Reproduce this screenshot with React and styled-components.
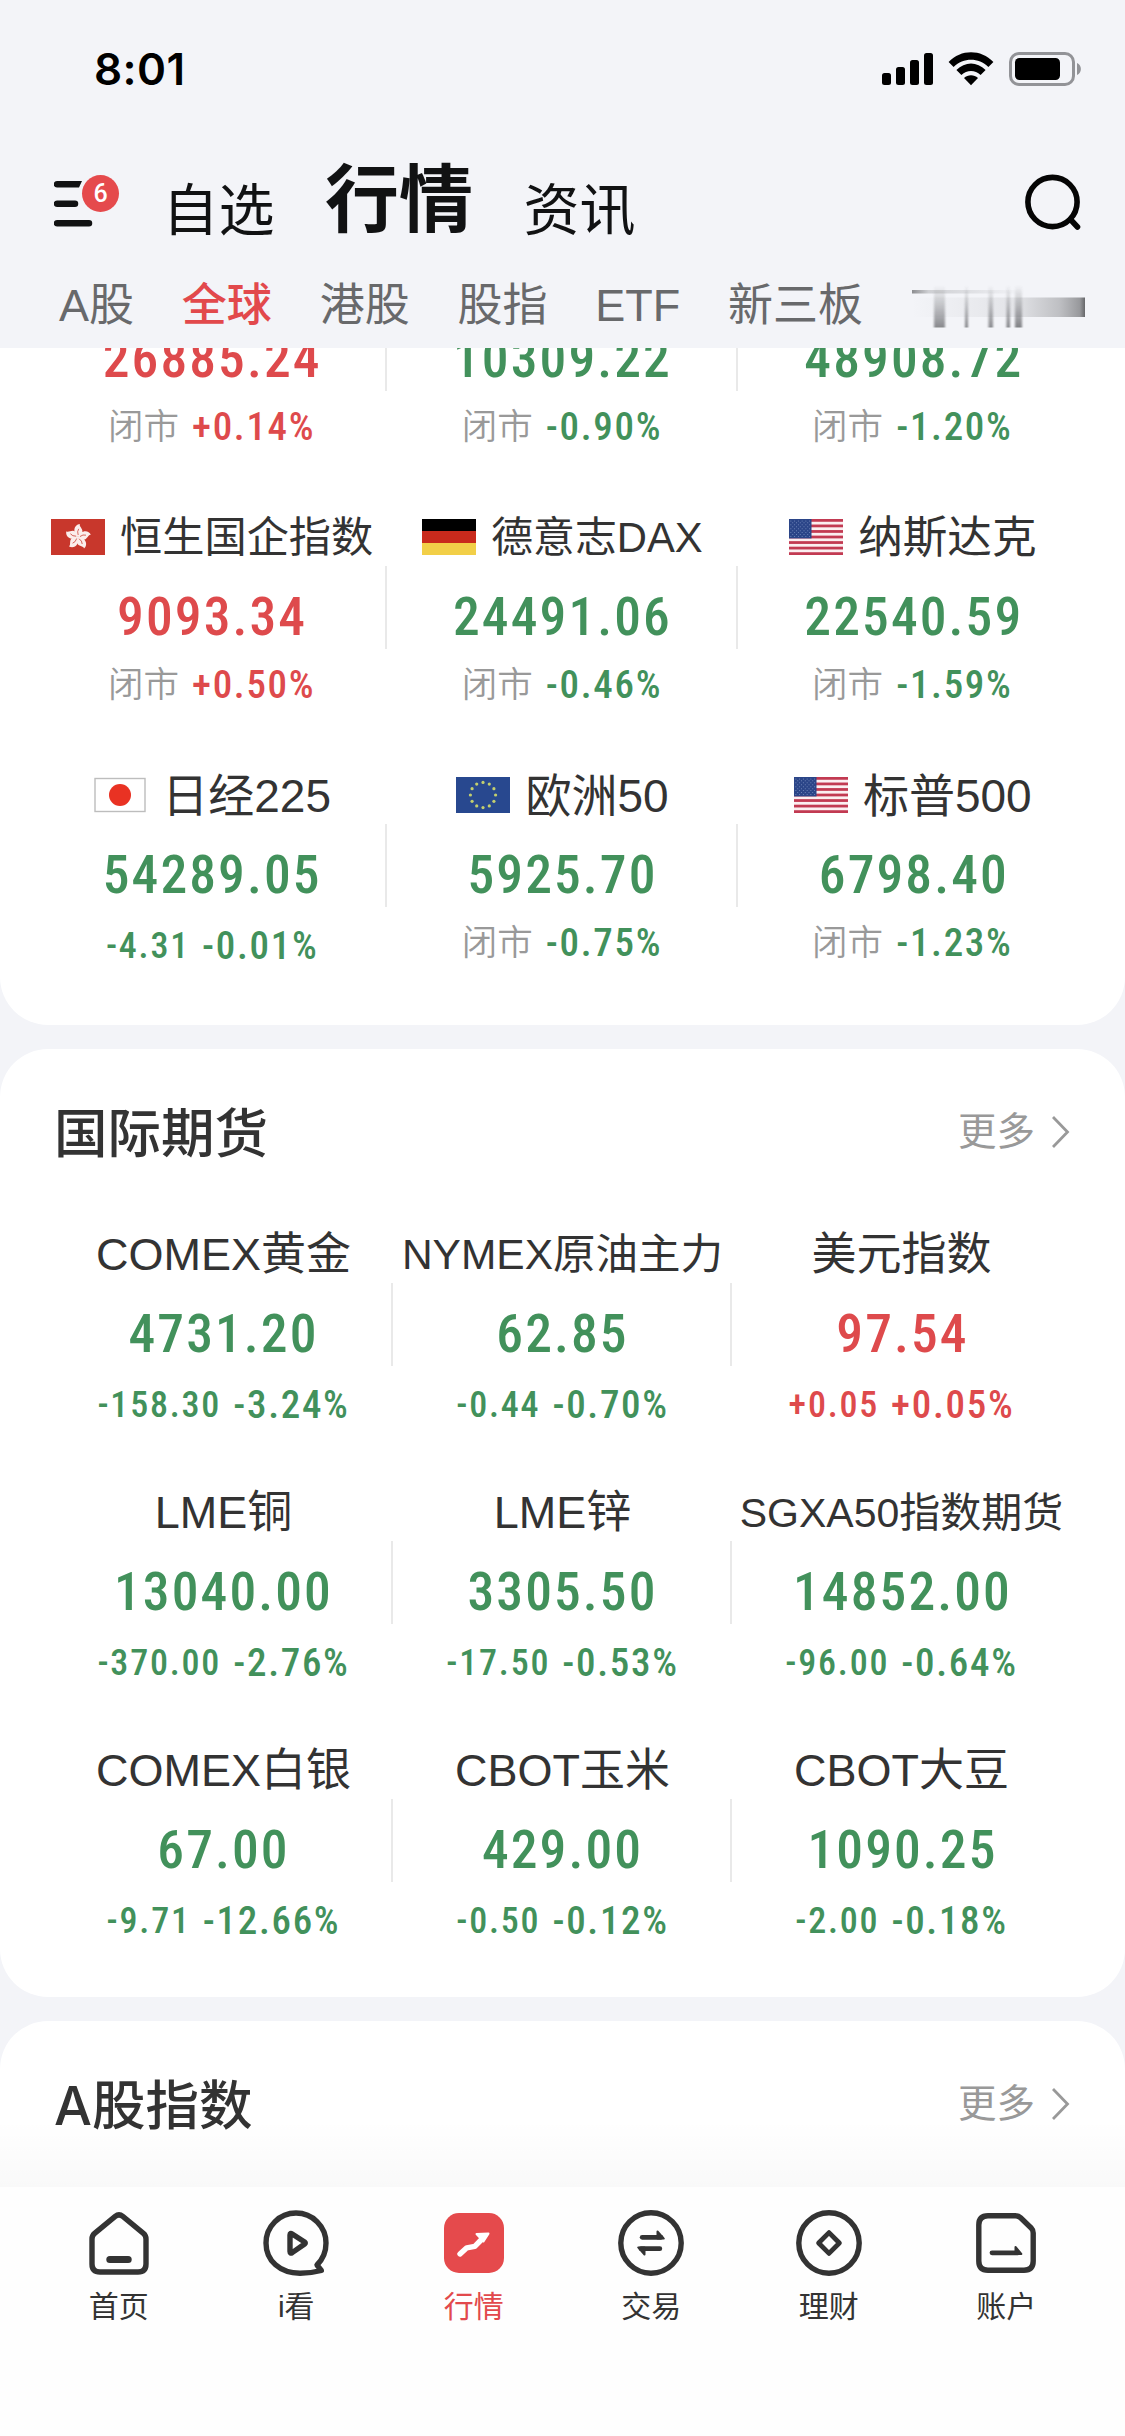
import React from "react";
import styled, { createGlobalStyle } from "styled-components";

const RED = "#de4a4c";
const GREEN = "#42915b";
const INK = "#333333";

const textStack = `"Liberation Sans", "Noto Sans CJK SC", sans-serif`;
const numberStack = `Roboto, "Noto Sans CJK SC", sans-serif`;

const GlobalStyle = createGlobalStyle`
  * { box-sizing: border-box; }
  body {
    margin: 0;
    background: #f3f4f8;
    font-family: ${textStack};
    color: ${INK};
  }
  svg { display: block; flex: none; }
`;

const Screen = styled.div`
  width: 1125px;
  height: 2436px;
  display: flex;
  flex-direction: column;
  overflow: hidden;
  background: #f3f4f8;
`;

/* ---------- header ---------- */

const Header = styled.header`
  flex: none;
  height: 348px;
  background: #f3f4f8;
`;

const StatusBar = styled.div`
  height: 138px;
  padding: 0 43px 0 94px;
  display: flex;
  align-items: center;
  justify-content: space-between;
`;

const Clock = styled.span`
  font: 600 44px/1 Inter, sans-serif;
  letter-spacing: 0.4px;
  color: #000;
`;

const StatusIcons = styled.div`
  display: flex;
  align-items: center;
  gap: 15px;
`;

const NavBar = styled.nav`
  height: 122px;
  padding: 3px 43px 0 54px;
  display: flex;
  align-items: center;
`;

const MenuButton = styled.div`
  position: relative;
  width: 65px;
  height: 54px;
  padding-top: 6px;
  margin-top: 3px;
`;

const Badge = styled.span`
  position: absolute;
  top: 0;
  right: 0;
  width: 37px;
  height: 37px;
  border-radius: 50%;
  background: #e54a4c;
  color: #fff;
  font: 500 25px/37px ${numberStack};
  text-align: center;
`;

const NavTabs = styled.div`
  display: flex;
  align-items: center;
  gap: 50.5px;
  margin-left: 43.5px;
  flex: 1;
`;

const NavTab = styled.span`
  color: #111213;
  line-height: 80px;
  font-size: ${(p) => (p.$active ? 74 : 56)}px;
  font-weight: ${(p) => (p.$active ? 700 : 400)};
  padding-top: ${(p) => (p.$active ? 0 : 20)}px;
`;

const SubTabs = styled.div`
  height: 88px;
  padding: 4px 0 0 59px;
  display: flex;
  align-items: center;
  gap: 47.8px;
`;

const SubTab = styled.span`
  font-size: 45px;
  line-height: 60px;
  white-space: nowrap;
  color: ${(p) => (p.$active ? "#e2494c" : "#68696b")};
  font-weight: ${(p) => (p.$active ? 500 : 400)};
`;

/* ---------- content ---------- */

const Content = styled.main`
  flex: 1;
  min-height: 0;
  overflow: hidden;
  display: flex;
  flex-direction: column;
  gap: 24px;
`;

const Card = styled.section`
  flex: none;
  background: #fff;
  border-radius: ${(p) => (p.$scrolled ? "0 0 48px 48px" : "48px")};
  margin-top: ${(p) => (p.$scrolled ? -40 : 0)}px;
  padding-bottom: ${(p) => (p.$scrolled ? 3 : p.$continues ? 120 : 0)}px;
`;

const CardHeader = styled.div`
  height: 170px;
  margin-bottom: 4px;
  padding: 0 55px 0 54px;
  display: flex;
  align-items: center;
  justify-content: space-between;
`;

const CardTitle = styled.h2`
  margin: 0;
  font-family: Inter, "Noto Sans CJK SC", sans-serif;
  font-size: 53.5px;
  line-height: 64px;
  font-weight: 500;
  color: ${INK};
`;

const More = styled.span`
  display: flex;
  align-items: center;
  gap: 17px;
  margin-top: -4px;
  font-size: 38.5px;
  line-height: 48px;
  color: #999;
`;

const QuoteGrid = styled.div`
  display: grid;
  grid-template-columns: repeat(3, 1fr);
  padding: 0 ${(p) => p.$inset}px;
`;

const Quote = styled.div`
  display: flex;
  flex-direction: column;
  height: ${(p) => (p.$partial ? 198 : 258)}px;
`;

const QuoteName = styled.div`
  height: 60px;
  padding-top: 4px;
  display: flex;
  align-items: center;
  justify-content: center;
  gap: 15px;
  margin: 0 -20px;
  white-space: nowrap;
  line-height: 60px;
  font-size: ${(p) => p.$size}px;
  color: ${INK};

  svg {
    margin-top: -2px;
  }
`;

const Price = styled.div`
  height: 83px;
  padding-top: 18px;
  padding-left: 2px;
  line-height: 66px;
  text-align: center;
  font-family: ${numberStack};
  font-weight: 500;
  font-stretch: 87%;
  font-size: 53.5px;
  letter-spacing: 2.1px;
  color: ${(p) => p.$color};
  border-right: ${(p) => (p.$last ? "0" : "2px solid #e9e9e9")};
`;

const Change = styled.div`
  height: 72px;
  padding-top: ${(p) => (p.$live ? 6 : 0)}px;
  padding-right: ${(p) => (p.$live ? 0 : 1)}px;
  display: flex;
  align-items: center;
  justify-content: center;
  gap: ${(p) => (p.$live ? 12 : 13)}px;
  color: ${(p) => p.$color};
  font-family: ${numberStack};
  font-stretch: 87%;
  white-space: nowrap;
`;

const Closed = styled.span`
  font-family: ${textStack};
  font-size: 35.5px;
  line-height: 48px;
  margin-top: -1px;
  font-weight: 350;
  color: #999;
`;

const Delta = styled.span`
  font-size: 36px;
  line-height: 48px;
  font-weight: 500;
  letter-spacing: 1.8px;
`;

const Percent = styled.span`
  font-size: 39px;
  line-height: 48px;
  font-weight: 500;
  letter-spacing: 1.7px;
`;

/* ---------- bottom tab bar ---------- */

const FadeAbove = styled.div`
  flex: none;
  height: 68px;
  margin-top: -68px;
  position: relative;
  background: linear-gradient(rgba(0, 0, 0, 0), rgba(0, 0, 0, 0.022));
`;

const TabBar = styled.footer`
  flex: none;
  height: 249px;
  padding: 22px 30px 0;
  display: grid;
  grid-template-columns: repeat(6, 1fr);
  align-items: start;
  background: #fefefe;
`;

const TabItem = styled.div`
  display: flex;
  flex-direction: column;
  align-items: center;
  gap: 10px;
  font-size: 30px;
  line-height: 40px;
  color: ${(p) => (p.$active ? "#e2494c" : INK)};
`;

/* ---------- icons ---------- */

const Signal = () => (
  <svg width="51" height="34" viewBox="0 0 51 34">
    <rect x="0" y="21" width="9" height="12" rx="2.5" />
    <rect x="14" y="15" width="9" height="18" rx="2.5" />
    <rect x="28" y="8" width="9" height="25" rx="2.5" />
    <rect x="42" y="1" width="9" height="32" rx="2.5" />
  </svg>
);

const Wifi = () => (
  <svg width="46" height="34" viewBox="0 0 46 34">
    <path d="M0.6 10 C13 -3 33 -3 45.4 10 L40.4 15 C30.5 5.4 15.5 5.4 5.6 15 Z" />
    <path d="M8.4 18 C17 9.3 29 9.3 37.6 18 L32.6 23 C27 17.8 19 17.8 13.4 23 Z" />
    <path d="M16 26 C20 22.2 26 22.2 30 26 L23 33.2 Z" />
  </svg>
);

const Battery = () => (
  <svg width="73" height="34" viewBox="0 0 73 34">
    <rect x="1.5" y="1.5" width="63" height="31" rx="8.5" fill="none" stroke="#929397" strokeWidth="3" />
    <rect x="6" y="6" width="45" height="22" rx="4.5" />
    <path d="M68 11 C73.2 13 73.2 21 68 23 Z" fill="#929397" />
  </svg>
);

const MenuLines = () => (
  <svg width="44" height="46" viewBox="0 0 44 46">
    <path d="M3 0 H28 L25 6.5 H3 A3.2 3.2 0 0 1 3 0Z M3 19.5 H21 A3.2 3.2 0 0 1 21 26 H3 A3.2 3.2 0 0 1 3 19.5Z M3 39 H35 A3.2 3.2 0 0 1 35 45.5 H3 A3.2 3.2 0 0 1 3 39Z" fill="#111213" />
  </svg>
);

const Search = () => (
  <svg width="58" height="60" viewBox="0 0 58 60" fill="none" stroke="#050505" strokeWidth="5.6" strokeLinecap="round">
    <circle cx="28.5" cy="31" r="24.6" />
    <path d="M46.5 48.5 L53.5 56" />
  </svg>
);

const smearBars = [
  [23, 11, 0.65],
  [54, 3, 0.7],
  [77.5, 4.5, 0.65],
  [95.5, 3.5, 0.7],
  [104, 7, 0.7],
];

const SmearedTab = () => (
  <svg width="176" height="48" viewBox="0 0 176 48">
    <defs>
      <linearGradient id="down" x1="0" y1="0" x2="0" y2="1">
        <stop offset="0" stopColor="#606164" stopOpacity="0" />
        <stop offset="0.5" stopColor="#606164" stopOpacity="0.5" />
        <stop offset="1" stopColor="#505154" stopOpacity="1" />
      </linearGradient>
      <linearGradient id="across" x1="0" y1="0" x2="1" y2="0">
        <stop offset="0" stopColor="#77787b" stopOpacity="0" />
        <stop offset="0.6" stopColor="#77787b" stopOpacity="0.13" />
        <stop offset="0.85" stopColor="#77787b" stopOpacity="0.42" />
        <stop offset="0.97" stopColor="#66676a" stopOpacity="0.65" />
        <stop offset="1" stopColor="#66676a" stopOpacity="1" />
      </linearGradient>
      <linearGradient id="back" x1="0" y1="0" x2="1" y2="0">
        <stop offset="0" stopColor="#606164" stopOpacity="0.7" />
        <stop offset="0.15" stopColor="#606164" stopOpacity="0.25" />
        <stop offset="1" stopColor="#606164" stopOpacity="0" />
      </linearGradient>
      <filter id="soften" x="-50%" y="-5%" width="200%" height="110%">
        <feGaussianBlur stdDeviation="0.9 0.5" />
      </filter>
    </defs>
    <rect x="1" y="15.5" width="173" height="19.5" fill="url(#across)" />
    <rect x="1" y="8" width="110" height="3.5" fill="url(#back)" />
    {smearBars.map(([x, w, o]) => (
      <rect key={x} x={x} y="3" width={w} height="42.5" fill="url(#down)" opacity={o} filter="url(#soften)" />
    ))}
  </svg>
);

const Chevron = () => (
  <svg width="18" height="32" viewBox="0 0 18 32" fill="none" stroke="#999" strokeWidth="2.8">
    <path d="M1 1 L15.5 16 L1 31" />
  </svg>
);

const TabIcon = ({ children }) => (
  <svg width="68" height="68" viewBox="0 0 68 68" fill="none" stroke={INK} strokeWidth="5.4" strokeLinecap="round" strokeLinejoin="round">
    {children}
  </svg>
);

const HomeIcon = () => (
  <TabIcon>
    <path d="M30.2 7.4 Q34 4.4 37.8 7.4 L58.4 24.4 Q61 26.6 61 30 V55 Q61 63 53 63 H15 Q7 63 7 55 V30 Q7 26.6 9.6 24.4 Z" />
    <path d="M24.8 50.5 H43.2" strokeWidth="7" />
  </TabIcon>
);

const WatchIcon = () => (
  <TabIcon>
    <path d="M55 56 A31 31 0 0 0 64 34 A30 30 0 0 0 4 34 C4 52 18 64.2 38 64.2 C46 64.2 53 63.2 59.3 61.5 Z" />
    <path d="M28 26 Q28 23.6 30.2 25 L42.6 33 Q44 34 42.6 35 L30.2 43.6 Q28 45 28 42.6 Z" />
  </TabIcon>
);

const MarketIcon = () => (
  <TabIcon>
    <rect x="4" y="4" width="60" height="60" rx="15" fill="#e54a4c" stroke="none" />
    <path d="M20 45 L26.8 38.8 L34.8 37.4 L42 30" stroke="#fff" />
    <path d="M36.5 25 L48.5 24.6 L43.5 32.5 Z" fill="#fff" stroke="#fff" strokeWidth="2" />
  </TabIcon>
);

const TradeIcon = () => (
  <TabIcon>
    <circle cx="34" cy="34" r="30.2" />
    <path d="M25.2 28.3 H44" strokeWidth="4.8" />
    <path d="M40.5 22.5 L46.8 29.6 H40.5 Z" fill={INK} stroke={INK} strokeWidth="2" />
    <path d="M42.8 39.7 H24" strokeWidth="4.8" />
    <path d="M27.5 45.5 L21.2 38.4 H27.5 Z" fill={INK} stroke={INK} strokeWidth="2" />
  </TabIcon>
);

const WealthIcon = () => (
  <TabIcon>
    <circle cx="34" cy="34" r="30.2" />
    <path d="M34 23.6 L44.4 34 L34 44.4 L23.6 34 Z" strokeWidth="4.8" />
  </TabIcon>
);

const AccountIcon = () => (
  <TabIcon>
    <path d="M16 6.8 H43.5 Q46.5 6.8 48.6 8.8 L59.2 19 Q61.2 21 61.2 24 V52 Q61.2 61.2 52 61.2 H16 Q6.8 61.2 6.8 52 V16 Q6.8 6.8 16 6.8 Z" />
    <path d="M20 43.8 H46" strokeWidth="4.8" />
    <path d="M43.5 38 L49.3 45 H43.5 Z" fill={INK} stroke={INK} strokeWidth="2" />
  </TabIcon>
);

/* ---------- flags ---------- */

const around = (n, r, cx, cy) =>
  Array.from({ length: n }, (_, i) => {
    const a = (i * 2 * Math.PI) / n - Math.PI / 2;
    return [cx + r * Math.cos(a), cy + r * Math.sin(a)];
  });

const FlagFrame = ({ children }) => (
  <svg width="54" height="36" viewBox="0 0 54 36">{children}</svg>
);

const flags = {
  hk: (
    <FlagFrame>
      <rect width="54" height="36" fill="#c8372c" />
      {[5, 77, 149, 221, 293].map((a) => (
        <g key={a} transform={`rotate(${a} 27 18)`}>
          <path d="M27 18 C21 14.5 21.5 6 27.8 5 C26.6 7.5 32 9.5 30.8 13.5 C30 16 28 16.5 27 18 Z" fill="#fbeeec" />
          <path d="M27 16 Q25.4 12.5 27 9.8" stroke="#c8372c" strokeWidth="0.7" fill="none" />
        </g>
      ))}
    </FlagFrame>
  ),
  de: (
    <FlagFrame>
      <rect width="54" height="12" fill="#000" />
      <rect y="12" width="54" height="12" fill="#c92a1c" />
      <rect y="24" width="54" height="12" fill="#f2cf48" />
    </FlagFrame>
  ),
  us: (
    <FlagFrame>
      <rect width="54" height="36" fill="#fbeff1" />
      {[0, 1, 2, 3, 4, 5, 6].map((i) => (
        <rect key={i} y={(i * 72) / 13} width="54" height={36 / 13} fill="#c23a52" />
      ))}
      <rect width="22.5" height="19.4" fill="#2b4588" />
      {Array.from({ length: 9 }, (_, r) =>
        Array.from({ length: r % 2 ? 5 : 6 }, (_, c) => (
          <circle key={`${r}-${c}`} cx={1.9 + c * 3.75 + (r % 2 ? 1.87 : 0)} cy={1.9 + r * 1.95} r="0.5" fill="#7f94c4" />
        ))
      )}
    </FlagFrame>
  ),
  jp: (
    <FlagFrame>
      <rect x="2" y="1.5" width="50" height="33" fill="#fff" stroke="#bdbdbd" strokeWidth="1.4" />
      <circle cx="27" cy="18" r="11" fill="#e93223" />
    </FlagFrame>
  ),
  eu: (
    <FlagFrame>
      <rect width="54" height="36" fill="#28488f" />
      {around(12, 12.6, 27, 18).map(([x, y], i) => (
        <circle key={i} cx={x} cy={y} r="1.6" fill="#c3cf6e" />
      ))}
    </FlagFrame>
  ),
};

/* ---------- data ---------- */

const globalIndices = [
  { price: "26885.24", pct: "+0.14%" },
  { price: "10309.22", pct: "-0.90%" },
  { price: "48908.72", pct: "-1.20%" },
  { flag: "hk", name: "恒生国企指数", size: 42.2, price: "9093.34", pct: "+0.50%" },
  { flag: "de", name: "德意志DAX", size: 41.8, price: "24491.06", pct: "-0.46%" },
  { flag: "us", name: "纳斯达克", size: 44.6, price: "22540.59", pct: "-1.59%" },
  { flag: "jp", name: "日经225", size: 46, price: "54289.05", delta: "-4.31", pct: "-0.01%" },
  { flag: "eu", name: "欧洲50", size: 46, price: "5925.70", pct: "-0.75%" },
  { flag: "us", name: "标普500", size: 46, price: "6798.40", pct: "-1.23%" },
];

const futures = [
  { name: "COMEX黄金", price: "4731.20", delta: "-158.30", pct: "-3.24%" },
  { name: "NYMEX原油主力", size: 42.5, price: "62.85", delta: "-0.44", pct: "-0.70%" },
  { name: "美元指数", price: "97.54", delta: "+0.05", pct: "+0.05%" },
  { name: "LME铜", price: "13040.00", delta: "-370.00", pct: "-2.76%" },
  { name: "LME锌", price: "3305.50", delta: "-17.50", pct: "-0.53%" },
  { name: "SGXA50指数期货", size: 41, price: "14852.00", delta: "-96.00", pct: "-0.64%" },
  { name: "COMEX白银", price: "67.00", delta: "-9.71", pct: "-12.66%" },
  { name: "CBOT玉米", price: "429.00", delta: "-0.50", pct: "-0.12%" },
  { name: "CBOT大豆", price: "1090.25", delta: "-2.00", pct: "-0.18%" },
];

const subTabs = ["A股", "全球", "港股", "股指", "ETF", "新三板"];

const tabs = [
  ["首页", HomeIcon],
  ["i看", WatchIcon],
  ["行情", MarketIcon],
  ["交易", TradeIcon],
  ["理财", WealthIcon],
  ["账户", AccountIcon],
];

function QuoteCell({ item, last }) {
  const color = item.pct.startsWith("+") ? RED : GREEN;
  return (
    <Quote $partial={!item.name}>
      {item.name && (
        <QuoteName $size={item.size || 45}>
          {item.flag && flags[item.flag]}
          <span>{item.name}</span>
        </QuoteName>
      )}
      <Price $color={color} $last={last}>{item.price}</Price>
      <Change $color={color} $live={Boolean(item.delta)}>
        {item.delta ? <Delta>{item.delta}</Delta> : <Closed>闭市</Closed>}
        <Percent>{item.pct}</Percent>
      </Change>
    </Quote>
  );
}

function Quotes({ items, inset }) {
  return (
    <QuoteGrid $inset={inset}>
      {items.map((item, i) => (
        <QuoteCell key={item.price} item={item} last={i % 3 === 2} />
      ))}
    </QuoteGrid>
  );
}

function SectionHeader({ title }) {
  return (
    <CardHeader>
      <CardTitle>{title}</CardTitle>
      <More>
        更多
        <Chevron />
      </More>
    </CardHeader>
  );
}

export default function App() {
  return (
    <Screen>
      <GlobalStyle />
      <Header>
        <StatusBar>
          <Clock>8:01</Clock>
          <StatusIcons>
            <Signal />
            <Wifi />
            <Battery />
          </StatusIcons>
        </StatusBar>
        <NavBar>
          <MenuButton>
            <MenuLines />
            <Badge>6</Badge>
          </MenuButton>
          <NavTabs>
            <NavTab>自选</NavTab>
            <NavTab $active>行情</NavTab>
            <NavTab>资讯</NavTab>
          </NavTabs>
          <Search />
        </NavBar>
        <SubTabs>
          {subTabs.map((t) => (
            <SubTab key={t} $active={t === "全球"}>{t}</SubTab>
          ))}
          <SmearedTab />
        </SubTabs>
      </Header>
      <Content>
        <Card $scrolled>
          <Quotes items={globalIndices} inset={37} />
        </Card>
        <Card>
          <SectionHeader title="国际期货" />
          <Quotes items={futures} inset={54} />
        </Card>
        <Card $continues>
          <SectionHeader title="A股指数" />
        </Card>
      </Content>
      <FadeAbove />
      <TabBar>
        {tabs.map(([label, Icon]) => (
          <TabItem key={label} $active={label === "行情"}>
            <Icon />
            {label}
          </TabItem>
        ))}
      </TabBar>
    </Screen>
  );
}
